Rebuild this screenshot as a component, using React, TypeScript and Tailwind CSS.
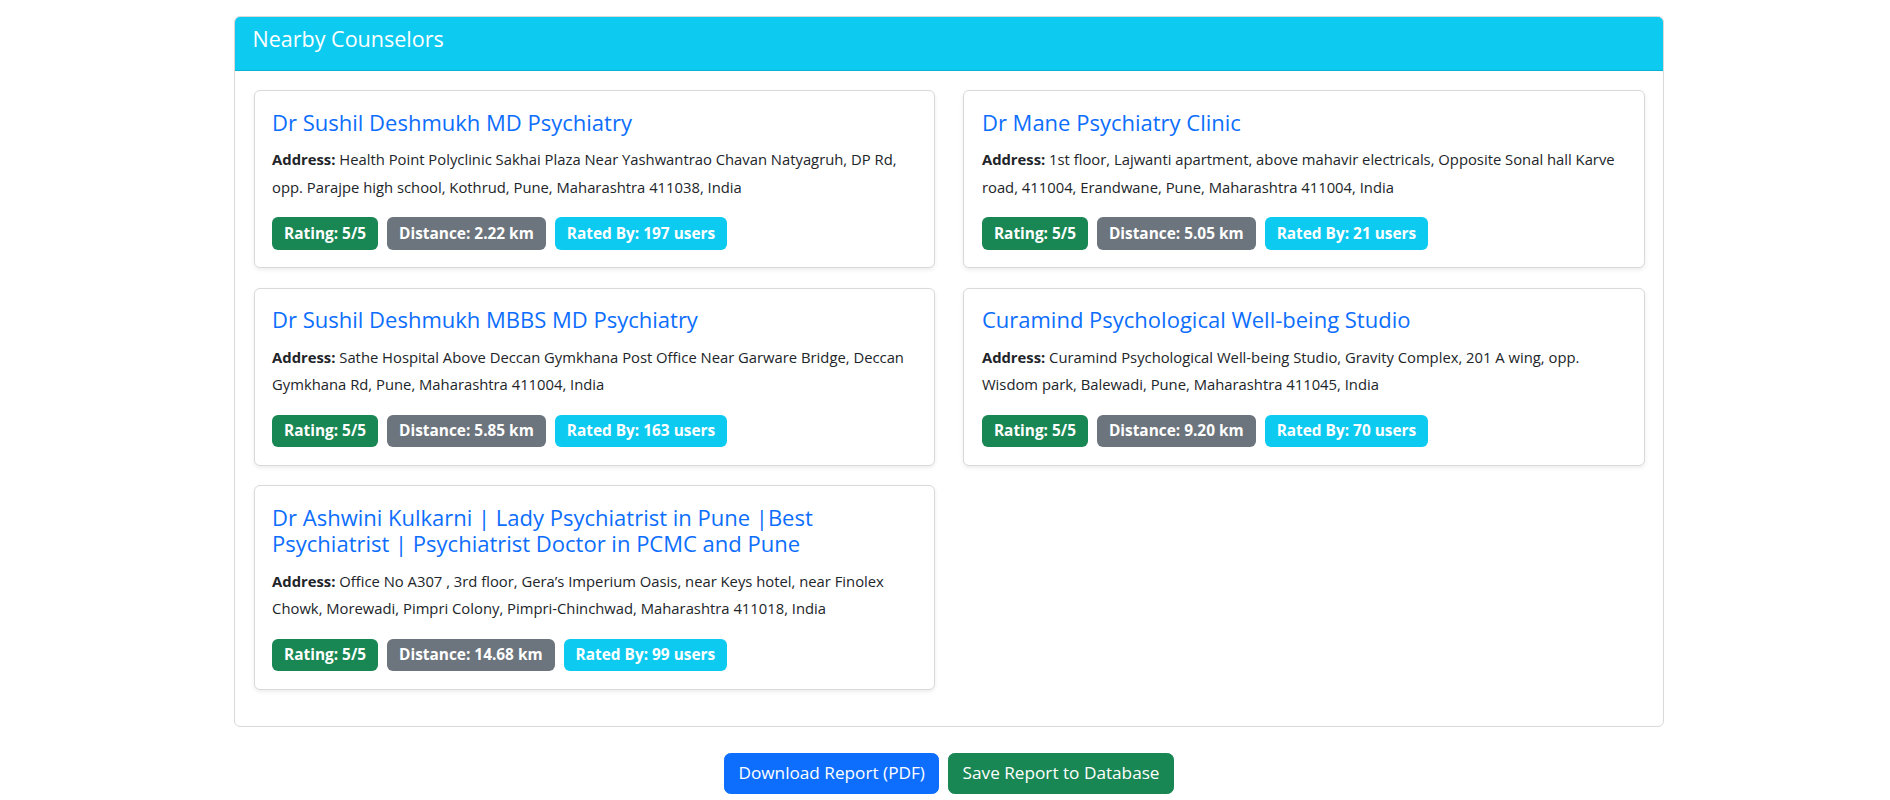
import React from "react";

type Counselor = {
  name: string;
  address: string;
  distance: string;
  ratedBy: number;
};

const counselors: Counselor[] = [
  {
    name: "Dr Sushil Deshmukh MD Psychiatry",
    address:
      "Health Point Polyclinic Sakhai Plaza Near Yashwantrao Chavan Natyagruh, DP Rd, opp. Parajpe high school, Kothrud, Pune, Maharashtra 411038, India",
    distance: "2.22",
    ratedBy: 197,
  },
  {
    name: "Dr Mane Psychiatry Clinic",
    address:
      "1st floor, Lajwanti apartment, above mahavir electricals, Opposite Sonal hall Karve road, 411004, Erandwane, Pune, Maharashtra 411004, India",
    distance: "5.05",
    ratedBy: 21,
  },
  {
    name: "Dr Sushil Deshmukh MBBS MD Psychiatry",
    address:
      "Sathe Hospital Above Deccan Gymkhana Post Office Near Garware Bridge, Deccan Gymkhana Rd, Pune, Maharashtra 411004, India",
    distance: "5.85",
    ratedBy: 163,
  },
  {
    name: "Curamind Psychological Well-being Studio",
    address:
      "Curamind Psychological Well-being Studio, Gravity Complex, 201 A wing, opp. Wisdom park, Balewadi, Pune, Maharashtra 411045, India",
    distance: "9.20",
    ratedBy: 70,
  },
  {
    name: "Dr Ashwini Kulkarni | Lady Psychiatrist in Pune |Best Psychiatrist | Psychiatrist Doctor in PCMC and Pune",
    address:
      "Office No A307 , 3rd floor, Gera\u2019s Imperium Oasis, near Keys hotel, near Finolex Chowk, Morewadi, Pimpri Colony, Pimpri-Chinchwad, Maharashtra 411018, India",
    distance: "14.68",
    ratedBy: 99,
  },
];

function CounselorCard({ c }: { c: Counselor }) {
  return (
    <div className="bg-white border border-[#d9d9d9] rounded-[6px] shadow-[0_2px_4px_rgba(0,0,0,0.075)] p-[17.6px]">
      <h5 className="text-[22px] leading-[26.4px] font-medium text-[#0d6efd] mb-[11px]">{c.name}</h5>
      <p className="text-[14.8px] leading-[27.7px] text-[#212529] mb-[15.4px]">
        <span className="font-bold">Address: </span>
        {c.address}
      </p>
      <div className="flex gap-[9px]">
        <span className="bg-[#198754] text-white font-bold text-[15.4px] leading-[15px] px-[12px] py-[8.8px] rounded-[6px]">
          Rating: 5/5
        </span>
        <span className="bg-[#6c757d] text-white font-bold text-[15.4px] leading-[15px] px-[12px] py-[8.8px] rounded-[6px]">
          Distance: {c.distance} km
        </span>
        <span className="bg-[#0dcaf0] text-white font-bold text-[15.4px] leading-[15px] px-[12px] py-[8.8px] rounded-[6px]">
          Rated By: {c.ratedBy} users
        </span>
      </div>
    </div>
  );
}

export default function App() {
  return (
    <div
      className="bg-white min-h-[800px] pt-[16px] text-[#212529]"
      style={{ fontFamily: '"Open Sans", "Noto Sans", sans-serif' }}
    >
      <div className="w-[1430px] ml-[234px]">
        <div className="border border-[#d9d9d9] rounded-[6px] overflow-hidden">
          <div className="bg-[#0dcaf0] border-b border-[#0cb2d4] px-[17.6px] pt-[8.8px] pb-[18px]">
            <h5 className="text-[21.5px] leading-[26.4px] font-medium text-white">Nearby Counselors</h5>
          </div>
          <div className="px-[18.5px] pt-[19px] pb-[36px] grid grid-cols-2 gap-x-[28.7px] gap-y-[19.6px] items-start">
            {counselors.map((c) => (
              <CounselorCard key={c.name} c={c} />
            ))}
          </div>
        </div>
        <div className="flex justify-center gap-[9.3px] mt-[26px]">
          <button className="bg-[#0d6efd] border border-[#0d6efd] text-white text-[17.2px] leading-[26.4px] px-[13.2px] py-[6.6px] rounded-[6.6px]">
            Download Report (PDF)
          </button>
          <button className="bg-[#198754] border border-[#198754] text-white text-[17.2px] leading-[26.4px] px-[13.2px] py-[6.6px] rounded-[6.6px]">
            Save Report to Database
          </button>
        </div>
      </div>
    </div>
  );
}
